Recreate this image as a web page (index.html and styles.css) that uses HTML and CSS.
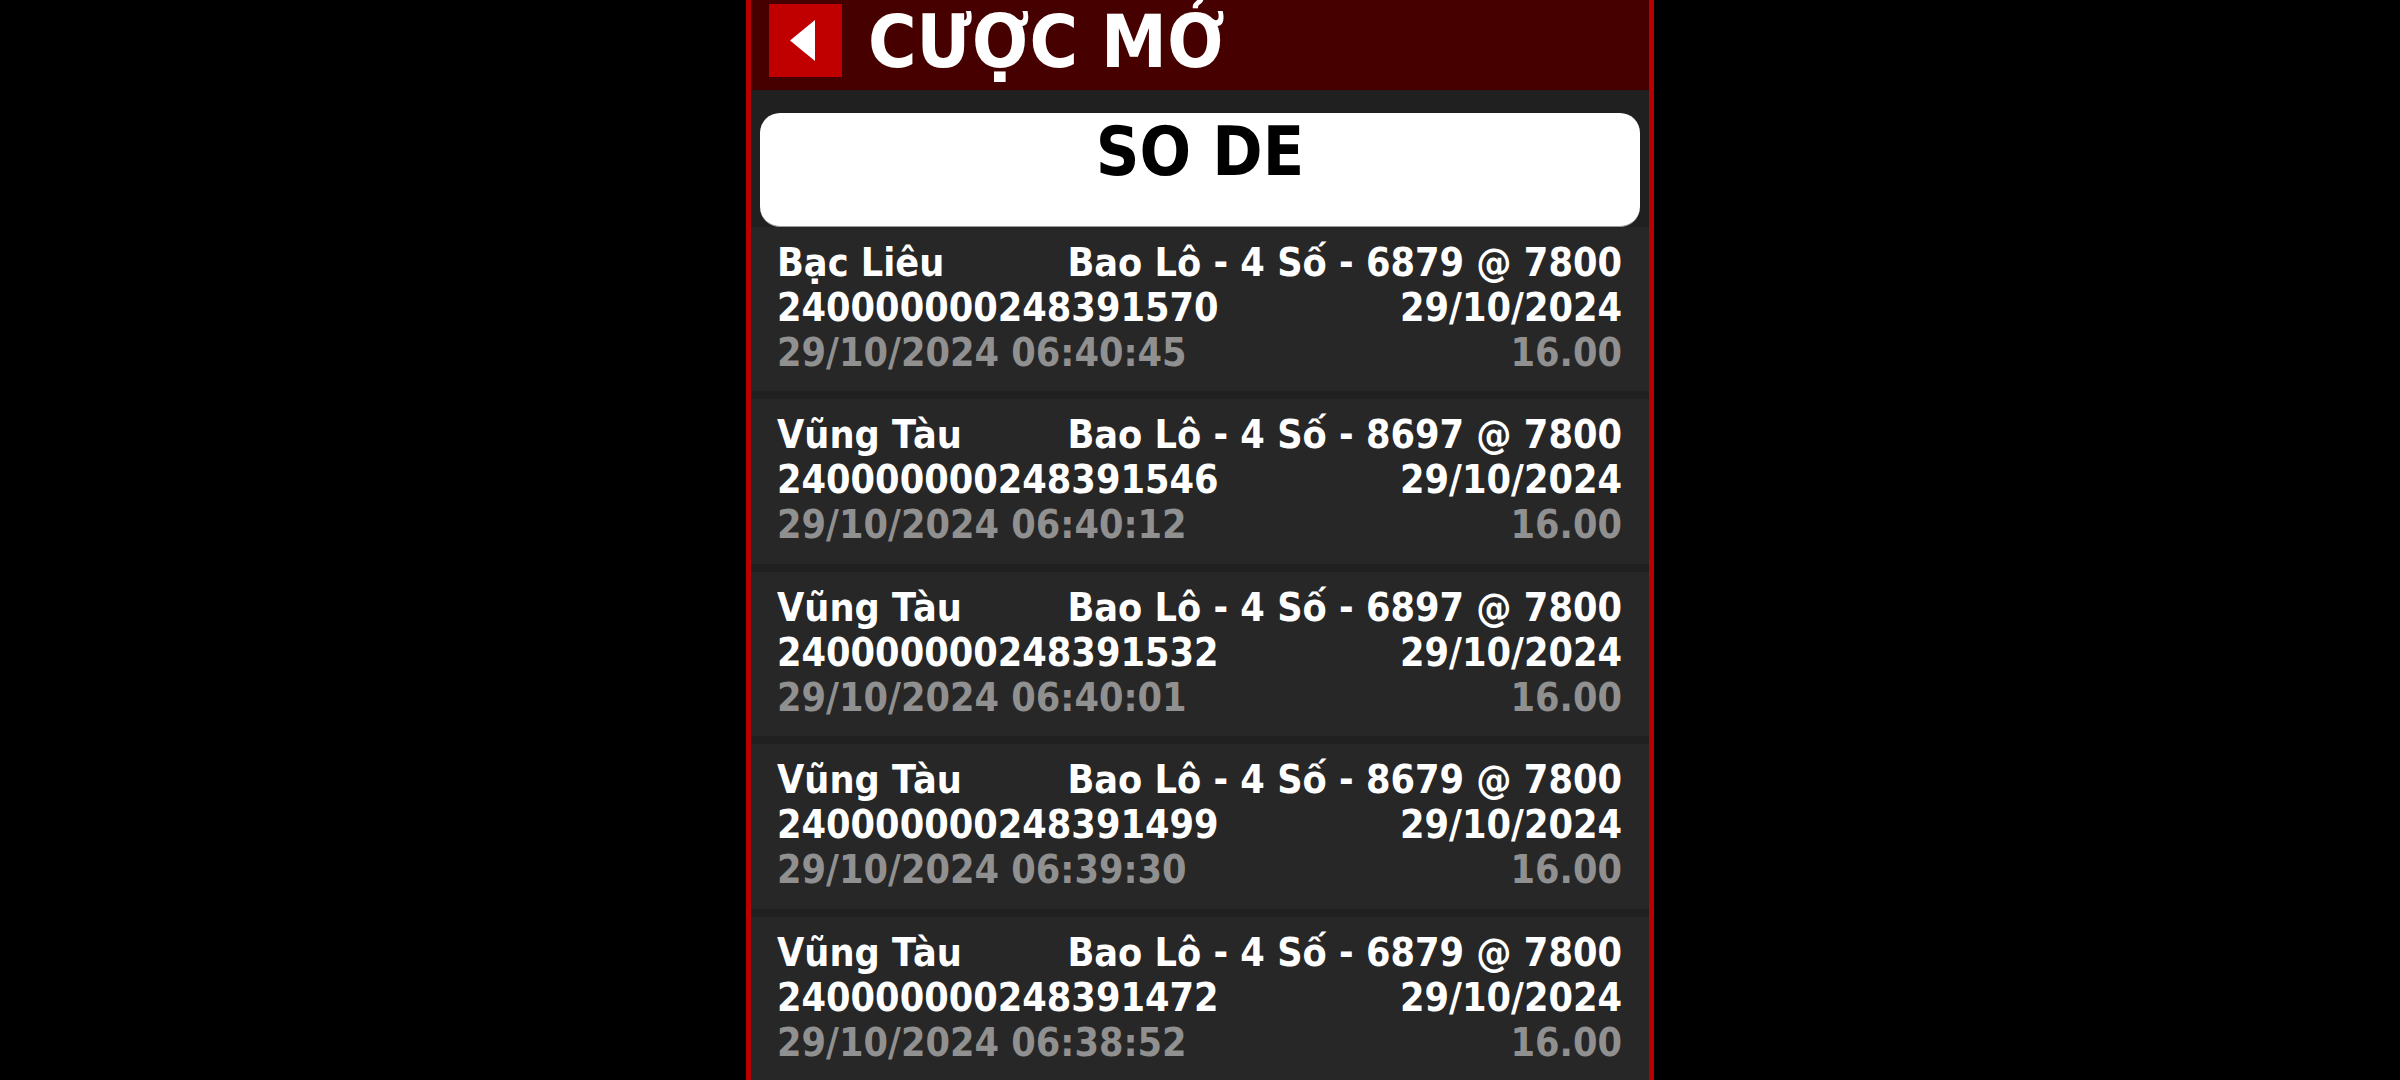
FILE: index.html
```html
<!DOCTYPE html>
<html lang="vi">
<head>
    <meta charset="UTF-8">
    <meta name="viewport" content="width=device-width, initial-scale=1.0">
    <title>Cược mở</title>
    <link rel="stylesheet" href="styles.css">
</head>
<body>
    <div class="app">
        <header class="top-bar">
            <a class="back-btn" href="#">
                <svg class="back-icon" width="73" height="73" viewBox="0 0 73 73"><polygon points="21,36.5 46,16 46,57" fill="#fff"/></svg>
            </a>
            <h1>CƯỢC MỞ</h1>
        </header>
        <div class="card-wrap">
            <div class="card-title">SO DE</div>
        </div>
        <div class="bet-list">
            <div class="bet-row">
                <div class="line"><span>Bạc Liêu</span><span>Bao Lô - 4 Số - 6879 @ 7800</span></div>
                <div class="line"><span>240000000248391570</span><span>29/10/2024</span></div>
                <div class="line muted"><span>29/10/2024 06:40:45</span><span>16.00</span></div>
            </div>
            <div class="bet-row">
                <div class="line"><span>Vũng Tàu</span><span>Bao Lô - 4 Số - 8697 @ 7800</span></div>
                <div class="line"><span>240000000248391546</span><span>29/10/2024</span></div>
                <div class="line muted"><span>29/10/2024 06:40:12</span><span>16.00</span></div>
            </div>
            <div class="bet-row">
                <div class="line"><span>Vũng Tàu</span><span>Bao Lô - 4 Số - 6897 @ 7800</span></div>
                <div class="line"><span>240000000248391532</span><span>29/10/2024</span></div>
                <div class="line muted"><span>29/10/2024 06:40:01</span><span>16.00</span></div>
            </div>
            <div class="bet-row">
                <div class="line"><span>Vũng Tàu</span><span>Bao Lô - 4 Số - 8679 @ 7800</span></div>
                <div class="line"><span>240000000248391499</span><span>29/10/2024</span></div>
                <div class="line muted"><span>29/10/2024 06:39:30</span><span>16.00</span></div>
            </div>
            <div class="bet-row">
                <div class="line"><span>Vũng Tàu</span><span>Bao Lô - 4 Số - 6879 @ 7800</span></div>
                <div class="line"><span>240000000248391472</span><span>29/10/2024</span></div>
                <div class="line muted"><span>29/10/2024 06:38:52</span><span>16.00</span></div>
            </div>
        </div>
    </div>
</body>
</html>
```

FILE: styles.css
```css
html, body {
    margin: 0;
    padding: 0;
    height: 100%;
    overflow: hidden;
    background-color: #000;
}
body {
    font-family: "DejaVu Sans", sans-serif;
    font-stretch: condensed;
    font-weight: bold;
    color: #fff;
}
.app {
    box-sizing: border-box;
    width: 908px;
    height: 1080px;
    margin: 0 auto;
    border-left: 5px solid #b80000;
    border-right: 5px solid #b80000;
    background-color: #202020;
    overflow: hidden;
}
.top-bar {
    display: flex;
    align-items: center;
    height: 90px;
    padding-left: 18px;
    background-color: #470000;
}
.top-bar h1 {
    margin: -6px 0 0 26px;
    font-size: 73.5px;
    line-height: 80px;
    font-weight: bold;
}
.back-btn {
    display: block;
    width: 73px;
    height: 73px;
    margin-top: -9px;
    background-color: #c00000;
}
.back-icon {
    display: block;
}
.card-wrap {
    padding: 23px 9px 0;
}
.card-title {
    box-sizing: border-box;
    height: 113.5px;
    padding-top: 3px;
    background-color: #fff;
    border-bottom: 1px solid #999;
    border-radius: 20px;
    color: #000;
    font-size: 67.5px;
    line-height: 72px;
    text-align: center;
}
.bet-row {
    box-sizing: border-box;
    height: 172.5px;
    padding: 13px 27px 0 26px;
    background-color: #272727;
    border-bottom: 8px solid #202020;
    font-size: 39.2px;
    line-height: 45px;
}
.line {
    display: flex;
    justify-content: space-between;
}
.muted {
    color: #909090;
}
```
